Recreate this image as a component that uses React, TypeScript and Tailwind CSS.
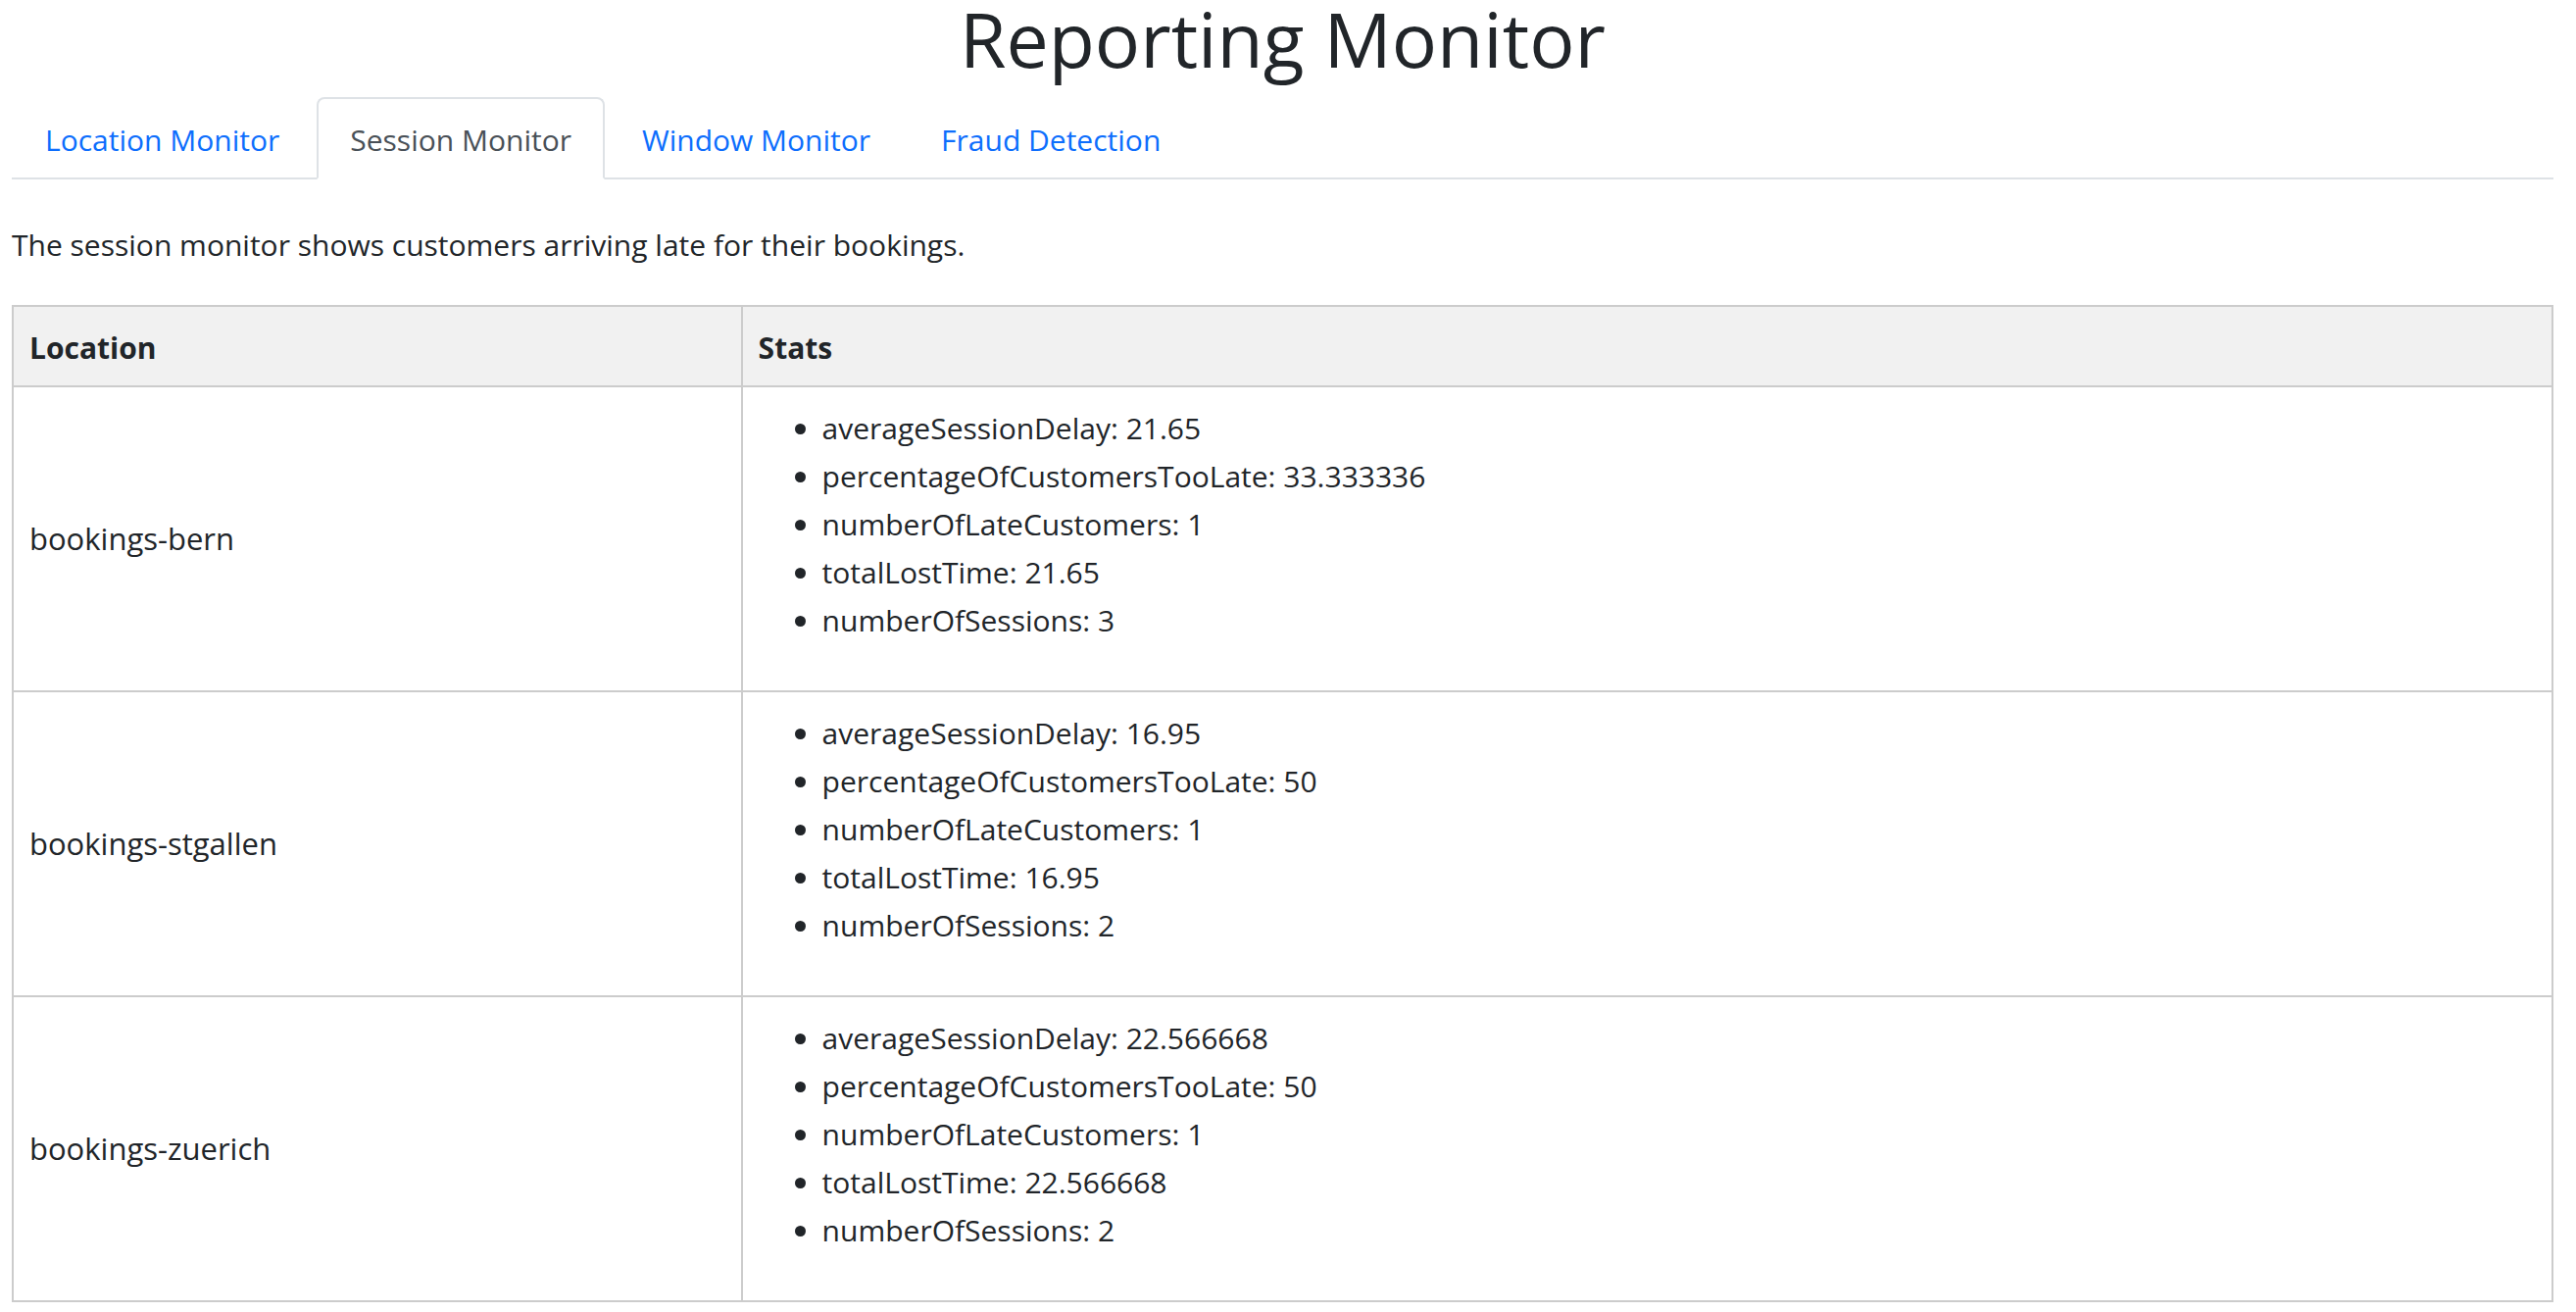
const tabs = ["Location Monitor", "Session Monitor", "Window Monitor", "Fraud Detection"];

const rows = [
  {
    location: "bookings-bern",
    stats: [
      ["averageSessionDelay", "21.65"],
      ["percentageOfCustomersTooLate", "33.333336"],
      ["numberOfLateCustomers", "1"],
      ["totalLostTime", "21.65"],
      ["numberOfSessions", "3"],
    ],
  },
  {
    location: "bookings-stgallen",
    stats: [
      ["averageSessionDelay", "16.95"],
      ["percentageOfCustomersTooLate", "50"],
      ["numberOfLateCustomers", "1"],
      ["totalLostTime", "16.95"],
      ["numberOfSessions", "2"],
    ],
  },
  {
    location: "bookings-zuerich",
    stats: [
      ["averageSessionDelay", "22.566668"],
      ["percentageOfCustomersTooLate", "50"],
      ["numberOfLateCustomers", "1"],
      ["totalLostTime", "22.566668"],
      ["numberOfSessions", "2"],
    ],
  },
];

export default function App() {
  return (
    <main className="pr-[23px] pl-3 font-['Open_Sans',sans-serif] text-[30px] leading-[49px] text-[#212529]">
      <h1 className="text-center text-[77px] leading-[80px] font-normal">Reporting Monitor</h1>
      <nav className="mt-[19px] flex gap-1 border-b-2 border-[#dee2e6]">
        {tabs.map((tab) => (
          <a
            key={tab}
            href="#"
            aria-current={tab === "Session Monitor" ? "page" : undefined}
            className={
              tab === "Session Monitor"
                ? "-mb-[2px] rounded-t-lg border-2 border-[#dee2e6] border-b-white bg-white px-8 pt-[17px] pb-[14px] text-[#495057]"
                : "-mb-[2px] border-2 border-transparent px-8 pt-[17px] pb-[14px] text-[#0d6efd]"
            }
          >
            {tab}
          </a>
        ))}
      </nav>
      <p className="mt-[42px]">The session monitor shows customers arriving late for their bookings.</p>
      <table className="mt-[37px] w-full table-fixed border-collapse border-2 border-[#cccccc]">
        <colgroup>
          <col className="w-[28.7%]" />
          <col />
        </colgroup>
        <thead className="bg-[#f1f1f1] text-left">
          <tr>
            <th className="border-2 border-[#cccccc] px-4 pt-[17px] pb-[14px] font-bold">Location</th>
            <th className="border-2 border-[#cccccc] px-4 pt-[17px] pb-[14px] font-bold">Stats</th>
          </tr>
        </thead>
        <tbody>
          {rows.map((row) => (
            <tr key={row.location}>
              <td className="border-2 border-[#cccccc] px-4 text-[31px]">{row.location}</td>
              <td className="border-2 border-[#cccccc] px-4 pt-[17px] pb-[47px]">
                <ul className="list-disc pl-[65px]">
                  {row.stats.map(([name, value]) => (
                    <li key={name}>
                      {name}: {value}
                    </li>
                  ))}
                </ul>
              </td>
            </tr>
          ))}
        </tbody>
      </table>
    </main>
  );
}
